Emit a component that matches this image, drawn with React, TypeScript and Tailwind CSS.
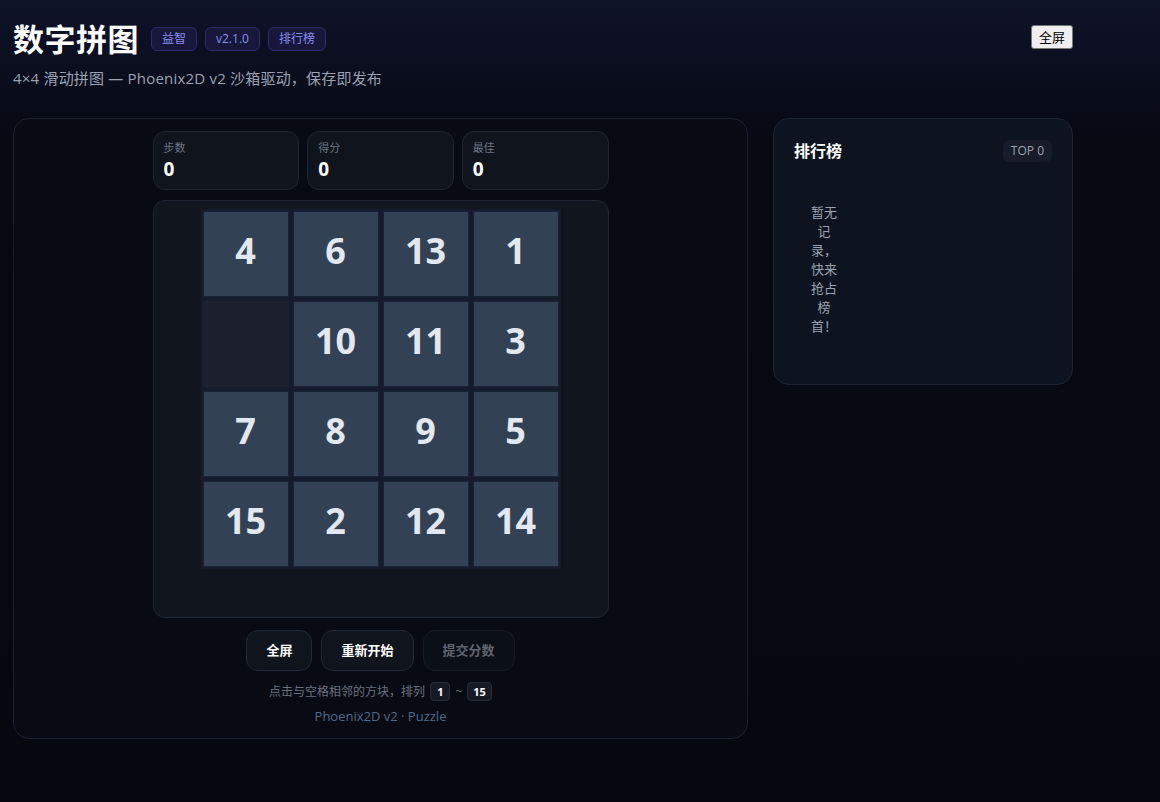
import React from "react";

const board: (number | null)[] = [4, 6, 13, 1, null, 10, 11, 3, 7, 8, 9, 5, 15, 2, 12, 14];

const font = { fontFamily: '"Open Sans", "Noto Sans CJK SC", sans-serif' };

function Stat({ label, value }: { label: string; value: number }) {
    return (
        <div className="flex-1 rounded-xl border border-[#1f2533] bg-[#10141c] px-[10px] pt-[8px] pb-[7px]">
            <div className="text-[11px] leading-[16px] text-[#6b7688]">{label}</div>
            <div className="text-[19px] leading-[26px] font-bold text-white">{value}</div>
        </div>
    );
}

export default function App() {
    return (
        <main
            style={font}
            className="min-h-[802px] w-full bg-[linear-gradient(180deg,#0f1329_0px,#0a0d1c_80px,#070a13_140px,#05080f_802px)] text-white"
        >
            <div className="w-[1086px] px-[13px] pt-[19px]">
                <header className="flex items-start justify-between">
                    <div>
                        <div className="flex items-center gap-3">
                            <h1 className="text-[31px] leading-[40px] font-bold tracking-[0.5px] text-white">数字拼图</h1>
                            <div className="flex items-center gap-2">
                                {["益智", "v2.1.0", "排行榜"].map((b) => (
                                    <span
                                        key={b}
                                        className="rounded-md border border-[#2c2c6a] bg-[#16173a] px-[10px] py-[3px] text-[12px] leading-[16px] text-[#8a8ff0]"
                                    >
                                        {b}
                                    </span>
                                ))}
                            </div>
                        </div>
                        <p className="mt-[8px] text-[15px] leading-[22px] tracking-[0.2px] text-[#9aa3b2]">
                            4×4 滑动拼图 — Phoenix2D v2 沙箱驱动，保存即发布
                        </p>
                    </div>
                    <button className="mt-[6px] rounded-[3px] border border-[#767676] bg-[#efefef] px-[7px] py-[2px] text-[13px] leading-[18px] text-black">
                        全屏
                    </button>
                </header>

                <div className="mt-[29px] flex items-start gap-[25px]">
                    <section className="w-[735px] rounded-2xl border border-[#1c2130] bg-[#080b13] px-[12px] pt-[12px] pb-[13px]">
                        <div className="mx-auto w-[456px]">
                            <div className="flex gap-[8px]">
                                <Stat label="步数" value={0} />
                                <Stat label="得分" value={0} />
                                <Stat label="最佳" value={0} />
                            </div>
                            <div className="mt-[10px] h-[418px] rounded-xl border border-[#1f2533] bg-[#11151d] pt-[8px]">
                                <div className="mx-auto grid w-[360px] grid-cols-4 gap-[4px] bg-[#141b2c] p-[2px]">
                                    {board.map((n, i) =>
                                        n === null ? (
                                            <div key={i} className="h-[86px] border border-[#1a2235] bg-[#1b1f2e]" />
                                        ) : (
                                            <div
                                                key={i}
                                                className="flex h-[86px] items-center justify-center border border-[#1a2235] bg-[#334155] pb-[6px] text-[36px] font-bold text-[#e2e8f0]"
                                            >
                                                {n}
                                            </div>
                                        )
                                    )}
                                </div>
                            </div>
                            <div className="mt-[12px] flex justify-center gap-[9px]">
                                <button className="h-[41px] rounded-xl border border-[#222838] bg-[#10141c] px-[19px] text-[13px] font-bold text-white">
                                    全屏
                                </button>
                                <button className="h-[41px] rounded-xl border border-[#222838] bg-[#10141c] px-[19px] text-[13px] font-bold text-white">
                                    重新开始
                                </button>
                                <button className="h-[41px] rounded-xl border border-[#181c27] bg-[#0b0f17] px-[19px] text-[13px] font-bold text-[#5f6470]">
                                    提交分数
                                </button>
                            </div>
                            <div className="mt-[11px] flex items-center justify-center gap-[5px] text-[12px] text-[#6b7280]">
                                <span>点击与空格相邻的方块，排列</span>
                                <kbd className="rounded-[4px] border border-[#262c3a] bg-[#151a24] px-[6px] text-[11px] leading-[17px] font-bold text-white" style={font}>1</kbd>
                                <span>~</span>
                                <kbd className="rounded-[4px] border border-[#262c3a] bg-[#151a24] px-[5px] text-[11px] leading-[17px] font-bold text-white" style={font}>15</kbd>
                            </div>
                            <p className="mt-[6px] text-center text-[13px] leading-[18px] text-[#52698a]">Phoenix2D v2 · Puzzle</p>
                        </div>
                    </section>

                    <aside className="w-[300px] rounded-2xl border border-[#1f2433] bg-[#0e1320] p-5">
                        <div className="flex items-center justify-between">
                            <h2 className="text-[16px] leading-[24px] font-bold text-white">排行榜</h2>
                            <span className="rounded-md bg-[#171c28] px-[8px] py-[3px] text-[12px] leading-[16px] text-[#9aa3b2]">TOP 0</span>
                        </div>
                        <div className="mt-[16px] px-4 pt-[24px] pb-[28px]">
                            <p className="w-[28px] text-center text-[13px] leading-[19px] text-[#9aa3b2]">暂无记录，快来抢占榜首！</p>
                        </div>
                    </aside>
                </div>
            </div>
        </main>
    );
}
